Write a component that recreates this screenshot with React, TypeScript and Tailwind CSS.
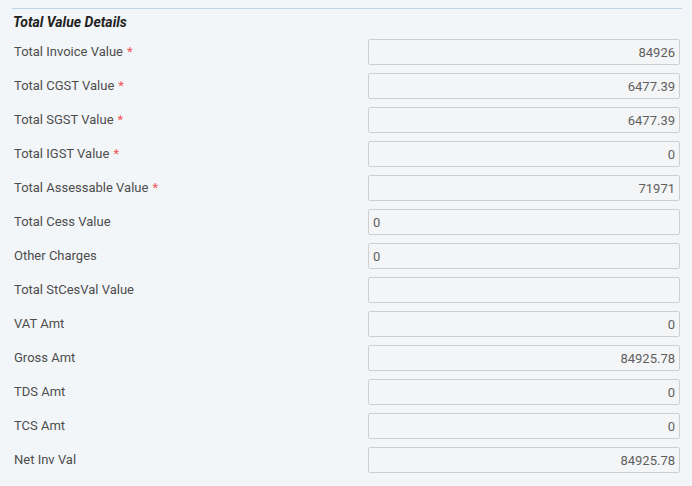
const rows: { label: string; value: string; required?: boolean; align: "right" | "left" }[] = [
  { label: "Total Invoice Value", value: "84926", required: true, align: "right" },
  { label: "Total CGST Value", value: "6477.39", required: true, align: "right" },
  { label: "Total SGST Value", value: "6477.39", required: true, align: "right" },
  { label: "Total IGST Value", value: "0", required: true, align: "right" },
  { label: "Total Assessable Value", value: "71971", required: true, align: "right" },
  { label: "Total Cess Value", value: "0", align: "left" },
  { label: "Other Charges", value: "0", align: "left" },
  { label: "Total StCesVal Value", value: "", align: "left" },
  { label: "VAT Amt", value: "0", align: "right" },
  { label: "Gross Amt", value: "84925.78", align: "right" },
  { label: "TDS Amt", value: "0", align: "right" },
  { label: "TCS Amt", value: "0", align: "right" },
  { label: "Net Inv Val", value: "84925.78", align: "right" },
];

export default function App() {
  return (
    <div className="w-[692px] h-[486px] bg-[#f3f6f9] pt-2 font-['Roboto',sans-serif] overflow-hidden">
      {/* Divider */}
      <div className="ml-3 mr-[10px] border-t border-[#bcd6ee]" />

      <div className="px-3">
        {/* Section Header */}
        <h3 className="mt-[3px] pl-px text-[14px] leading-5 font-bold italic text-[#222]">
          Total Value Details
        </h3>

        {/* Fields */}
        <div className="mt-[7px] flex flex-col gap-2">
          {rows.map((row) => (
            <div key={row.label} className="flex items-center">
              <label className="flex-1 pl-0.5 text-[13px] text-[#4d4d4d]">
                {row.label}
                {row.required && <span className="ml-1 text-[#f25555]">*</span>}
              </label>
              <input
                readOnly
                value={row.value}
                className={`w-[312px] h-[26px] rounded-[2px] border border-[#cfcfcf] bg-[#f4f5f6] text-[13px] text-[#5f5f5f] outline-none ${
                  row.align === "right" ? "text-right pr-[4px]" : "text-left pl-[4px]"
                }`}
              />
            </div>
          ))}
        </div>
      </div>
    </div>
  );
}
